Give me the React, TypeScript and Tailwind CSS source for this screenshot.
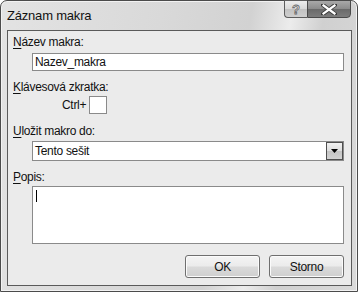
import React from "react";

const font = { fontFamily: '"Liberation Sans", Arial, sans-serif' };

function Label({ k, rest }: { k: string; rest: string }) {
  return (
    <div className="h-[15px] text-[12px] leading-[15px] text-[#111] tracking-[-0.3px]">
      <span className="underline underline-offset-[2px] decoration-[1px]">{k}</span>
      {rest}
    </div>
  );
}

function DlgButton({ children }: { children: React.ReactNode }) {
  return (
    <div className="w-[75px] h-[23px] rounded-[3px] border border-[#6f6f6f] bg-[linear-gradient(to_bottom,#f4f4f4_0%,#ebebeb_48%,#dadada_52%,#cfcfcf_100%)] shadow-[inset_0_0_0_1px_#fbfbfb] flex items-center justify-center text-[12px] text-[#111] tracking-[-0.3px]">
      {children}
    </div>
  );
}

export default function App() {
  return (
    <div style={font} className="w-[358px] h-[292px] bg-white">
      <div className="w-[358px] h-[292px] flex flex-col rounded-t-[7px] border border-[#4b4b4b] bg-[linear-gradient(100deg,#e3e3e3_0%,#d9d9d9_40%,#d2d2d2_62%,#ececec_72%,#d0d0d0_80%,#dadada_100%)] shadow-[inset_0_0_0_1px_#f2f2f2]">
        {/* title bar */}
        <div className="h-[29px] flex items-start justify-between">
          <div className="pl-[6px] pt-[7px] text-[13px] leading-[15px] text-[#111] tracking-[-0.2px]">
            Záznam makra
          </div>
          <div className="flex mr-[6px] -mt-px">
            <div className="w-[23px] h-[18px] rounded-bl-[4px] border border-[#5c5c5c] border-r-0 bg-[linear-gradient(to_bottom,#ededed_0%,#d8d8d8_50%,#c2c2c2_52%,#cfcfcf_100%)] flex items-center justify-center">
              <span
                className="text-[13px] font-bold leading-none text-[#e8e8e8]"
                style={{ WebkitTextStroke: "0.8px #6a6a6a" }}
              >
                ?
              </span>
            </div>
            <div className="w-[44px] h-[18px] rounded-br-[4px] border border-[#4a4a4a] bg-[linear-gradient(to_bottom,#a9a9a9_0%,#8c8c8c_48%,#6a6a6a_52%,#7c7c7c_100%)] flex items-center justify-center">
              <svg width="16" height="11" viewBox="0 0 16 11">
                <path
                  d="M2 1 L14 10 M14 1 L2 10"
                  stroke="#3a3a3a"
                  strokeWidth="4"
                  strokeLinecap="square"
                />
                <path
                  d="M2.5 1.5 L13.5 9.5 M13.5 1.5 L2.5 9.5"
                  stroke="#ffffff"
                  strokeWidth="2.2"
                  strokeLinecap="square"
                />
              </svg>
            </div>
          </div>
        </div>
        {/* client area */}
        <div className="flex-1 ml-[6px] mr-[5px] mb-[5px] border border-[#5a5a5a] bg-[#ebebeb] pl-[5px] pr-[7px] pt-[4px] flex flex-col">
          <Label k="N" rest="ázev makra:" />
          <div className="mt-[3px] ml-[19px] h-[18px] border border-[#8a8a8a] bg-white pl-[2px] text-[12px] leading-[16px] text-[#111] tracking-[-0.3px]">
            Nazev_makra
          </div>
          <div className="mt-[9px]">
            <Label k="K" rest="lávesová zkratka:" />
          </div>
          <div className="mt-[1px] ml-[49px] flex items-center">
            <span className="text-[12px] leading-[15px] text-[#111] tracking-[-0.3px]">Ctrl+</span>
            <div className="ml-[3px] w-[18px] h-[18px] border border-[#8a8a8a] bg-white" />
          </div>
          <div className="mt-[10px]">
            <Label k="U" rest="ložit makro do:" />
          </div>
          <div className="mt-[2px] ml-[19px] h-[20px] border border-[#8a8a8a] bg-white flex items-center justify-between">
            <span className="pl-[2px] text-[12px] leading-[15px] text-[#111] tracking-[-0.3px]">
              Tento sešit
            </span>
            <div className="w-[17px] h-[18px] border border-[#4e4e4e] bg-[linear-gradient(to_bottom,#f0f0f0_0%,#dcdcdc_50%,#c4c4c4_52%,#d2d2d2_100%)] flex items-center justify-center">
              <svg width="7" height="4" viewBox="0 0 7 4">
                <path d="M0 0 H7 L3.5 4 Z" fill="#000" />
              </svg>
            </div>
          </div>
          <div className="mt-[9px]">
            <Label k="P" rest="opis:" />
          </div>
          <div className="mt-px ml-[19px] h-[58px] border border-[#8a8a8a] bg-white relative">
            <div className="absolute left-[3px] top-[3px] w-px h-[12px] bg-black" />
          </div>
          <div className="mt-[11px] flex justify-end gap-[9px]">
            <DlgButton>OK</DlgButton>
            <DlgButton>Storno</DlgButton>
          </div>
        </div>
      </div>
    </div>
  );
}
